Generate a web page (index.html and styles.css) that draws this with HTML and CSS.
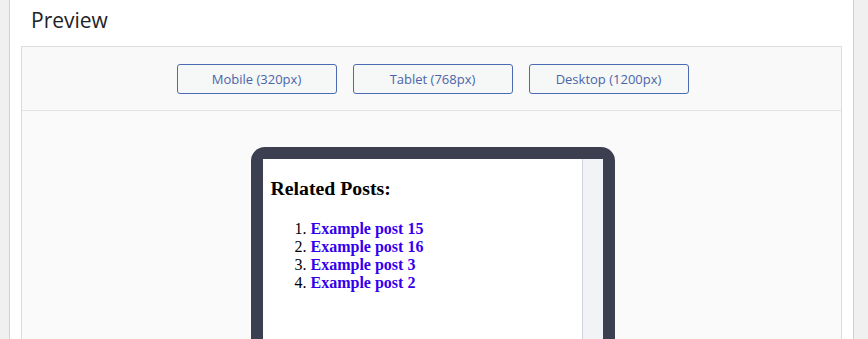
FILE: index.html
```html
<!DOCTYPE html>
<html>
<head>
<meta charset="utf-8">
<link rel="stylesheet" href="styles.css">
</head>
<body>
<div class="panel">
  <h2 class="title">Preview</h2>
  <div class="box">
    <div class="toolbar">
      <button class="btn">Mobile (320px)</button>
      <button class="btn">Tablet (768px)</button>
      <button class="btn">Desktop (1200px)</button>
    </div>
    <div class="stage">
      <div class="device">
        <div class="screen">
          <div class="page">
            <h3 class="rp-title">Related Posts:</h3>
            <ol class="rp-list">
              <li><a href="#">Example post 15</a></li>
              <li><a href="#">Example post 16</a></li>
              <li><a href="#">Example post 3</a></li>
              <li><a href="#">Example post 2</a></li>
            </ol>
          </div>
          <div class="scrollbar"></div>
        </div>
      </div>
    </div>
  </div>
</div>
</body>
</html>
```
FILE: styles.css
```css
html, body {
  margin: 0;
  padding: 0;
  background: #f0f0f0;
  height: 100%;
  overflow: hidden;
}
.panel {
  margin-left: 9px;
  width: 845px;
  height: 339px;
  overflow: hidden;
  background: #fff;
  border-left: 1px solid #d0d0d0;
  border-right: 1px solid #d0d0d0;
  padding: 6px 11px 0 11px;
  box-sizing: border-box;
}
.title {
  margin: 0 0 12px 0;
  padding-left: 10px;
  font-family: "Open Sans", sans-serif;
  font-weight: 400;
  font-size: 21px;
  line-height: 28px;
  color: #1d2327;
}
.box {
  border: 1px solid #dcdcdc;
  background: #fafafa;
  height: 300px;
}
.toolbar {
  display: flex;
  justify-content: center;
  gap: 16px;
  padding: 17px 0 16px 2px;
  background: #f9f9f9;
  border-bottom: 1px solid #e2e2e2;
}
.btn {
  width: 160px;
  height: 30px;
  margin: 0;
  padding: 0;
  border: 1px solid #4a6ab4;
  border-radius: 3px;
  background: #f6f7f7;
  color: #4a66a8;
  font-family: "Open Sans", sans-serif;
  font-size: 13px;
}
.stage {
  display: flex;
  justify-content: center;
  padding-top: 36px;
  padding-left: 2px;
}
.device {
  border: 12px solid #3b3f4f;
  border-bottom: none;
  border-radius: 14px 14px 0 0;
  background: #3b3f4f;
}
.screen {
  display: flex;
  width: 340px;
  height: 200px;
  background: #fff;
}
.page {
  width: 303px;
  padding: 0 8px;
  font-family: "Liberation Serif", serif;
  font-size: 16px;
  color: #000;
}
.rp-title {
  font-size: 19.8px;
  line-height: 22px;
  font-weight: 700;
  margin: 18px 0 21px 0;
}
.rp-list {
  margin: 0;
  padding-left: 40px;
}
.rp-list li {
  line-height: 18px;
}
.rp-list a {
  color: #3300ee;
  font-weight: 700;
  text-decoration: none;
}
.scrollbar {
  width: 20px;
  border-left: 1px solid #d0d4da;
  background: #f2f3f6;
}
```
